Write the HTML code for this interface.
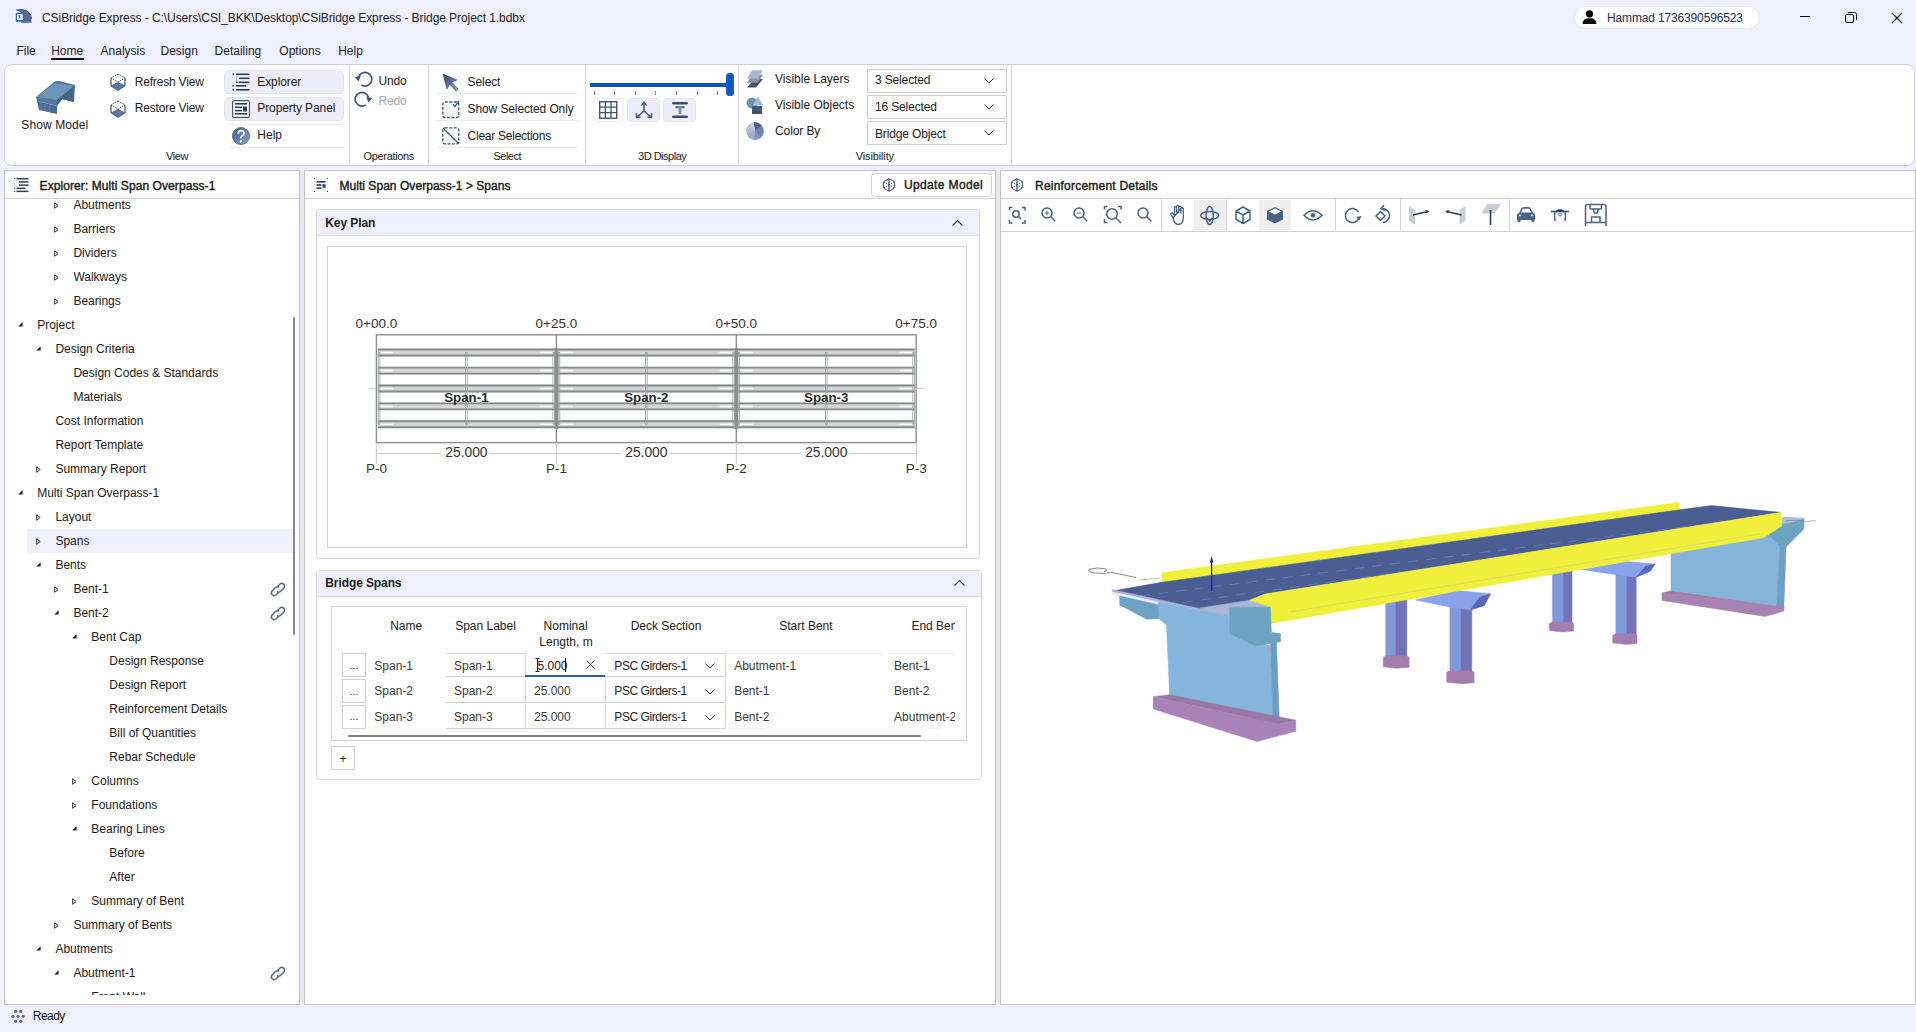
<!DOCTYPE html>
<html><head><meta charset="utf-8"><style>
*{margin:0;padding:0;box-sizing:border-box}
html,body{width:1916px;height:1032px;overflow:hidden}
body{background:#EFEFFD;position:relative;font-family:"Liberation Sans",sans-serif;color:#1b1b1b}
.a{position:absolute}
.t{position:absolute;line-height:12px;height:12px;white-space:pre;font-size:12px}
.sb{-webkit-text-stroke:0.4px currentColor}
svg{position:absolute;overflow:visible}
</style></head><body>
<svg style="left:15px;top:9px;" width="17" height="14" viewBox="0 0 17 14"><path d="M1.2 1 Q9 -0.5 13.5 3 Q16.5 6 16.6 13.8 L6 13.8 L6 3.5 Z" fill="#5E6696"/><path d="M1.2 1 Q9 -0.5 13.5 3 Q16.5 6 16.6 10" fill="none" stroke="#3C4570" stroke-width="0.9"/><rect x="0.8" y="3.8" width="8.4" height="9" rx="0.8" fill="#1C6ED6"/><rect x="2" y="5.2" width="5.8" height="5.8" fill="#F4F8FF"/><rect x="3.8" y="6" width="1.6" height="3.4" fill="#666"/></svg>
<div class="t" style="left:42.00px;top:11.64px;letter-spacing:-0.07px">CSiBridge Express - C:\Users\CSI_BKK\Desktop\CSiBridge Express - Bridge Project 1.bdbx</div>
<div class="a" style="left:1575px;top:6.5px;width:184px;height:21px;background:#fff;border-radius:11px;box-shadow:0 0 0 0.5px #e4e4ee"></div>
<svg style="left:1582px;top:10px;" width="15" height="14" viewBox="0 0 15 14"><circle cx="7.5" cy="3.8" r="3.6" fill="#000"/><path d="M0.5 14 Q0.5 8.2 7.5 8.2 Q14.5 8.2 14.5 14Z" fill="#000"/></svg>
<div class="t" style="left:1607.00px;top:11.74px;color:#1E2B4E;letter-spacing:-0.15px">Hammad 1736390596523</div>
<div class="a" style="left:1800px;top:16px;width:10px;height:1px;background:#111"></div>
<svg style="left:1845px;top:12px;" width="12" height="11" viewBox="0 0 12 11"><rect x="0.5" y="2.5" width="8" height="8" rx="1.5" fill="none" stroke="#111" stroke-width="1"/><path d="M3 0.5 H9.5 Q11.5 0.5 11.5 2.5 V8" fill="none" stroke="#111" stroke-width="1"/></svg>
<svg style="left:1891px;top:11.5px;" width="12" height="12" viewBox="0 0 12 12"><path d="M1 1 L11 11 M11 1 L1 11" stroke="#111" stroke-width="1.1"/></svg>
<div class="t" style="left:16.40px;top:44.94px">File</div>
<div class="t" style="left:51.20px;top:44.94px">Home</div>
<div class="t" style="left:100.60px;top:44.94px">Analysis</div>
<div class="t" style="left:160.50px;top:44.94px">Design</div>
<div class="t" style="left:214.60px;top:44.94px">Detailing</div>
<div class="t" style="left:279.30px;top:44.94px">Options</div>
<div class="t" style="left:338.20px;top:44.94px">Help</div>
<div class="a" style="left:51px;top:58px;width:33px;height:2px;background:#111"></div>
<div class="a" style="left:4px;top:64px;width:1911px;height:102px;background:#fff;border:1px solid #D0D0D2;border-radius:8px"></div>
<svg style="left:0px;top:0px;" width="30" height="1032" viewBox="0 0 30 1032"><circle cx="15.6" cy="1011.4" r="1.6" fill="#5A6A8A"/><circle cx="20.7" cy="1011.4" r="1.6" fill="#5A6A8A"/><circle cx="13" cy="1016.3" r="1.6" fill="#5A6A8A"/><circle cx="18" cy="1016.3" r="1.6" fill="#5A6A8A"/><circle cx="23.1" cy="1016.3" r="1.6" fill="#5A6A8A"/><circle cx="15.6" cy="1021.3" r="1.6" fill="#5A6A8A"/><circle cx="20.7" cy="1021.3" r="1.6" fill="#5A6A8A"/></svg>
<div class="t" style="left:32.80px;top:1009.74px;letter-spacing:-0.537px">Ready</div>
<div class="a" style="left:349px;top:65px;width:1px;height:100px;background:#DCDCE0"></div>
<div class="a" style="left:428px;top:65px;width:1px;height:100px;background:#DCDCE0"></div>
<div class="a" style="left:585px;top:65px;width:1px;height:100px;background:#DCDCE0"></div>
<div class="a" style="left:738px;top:65px;width:1px;height:100px;background:#DCDCE0"></div>
<div class="a" style="left:1011px;top:65px;width:1px;height:100px;background:#DCDCE0"></div>
<div class="t" style="left:166.00px;top:150.69px;font-size:11px;line-height:11px;height:11px;color:#222;letter-spacing:-0.411px">View</div>
<div class="t" style="left:363.50px;top:150.69px;font-size:11px;line-height:11px;height:11px;color:#222;letter-spacing:-0.33px">Operations</div>
<div class="t" style="left:493.50px;top:150.69px;font-size:11px;line-height:11px;height:11px;color:#222;letter-spacing:-0.512px">Select</div>
<div class="t" style="left:638.00px;top:150.69px;font-size:11px;line-height:11px;height:11px;color:#222;letter-spacing:-0.488px">3D Display</div>
<div class="t" style="left:855.70px;top:150.69px;font-size:11px;line-height:11px;height:11px;color:#222;letter-spacing:-0.123px">Visibility</div>
<svg style="left:35px;top:80px;" width="41" height="35" viewBox="0 0 41 35">
<path d="M1 17 L19 2 Q21 0.5 24 1 L40 5 L39 22 L27 19 L22 26 L2 21 Z" fill="#5578A0"/>
<path d="M2 17 L20 3 L39 6 L22 20 Z" fill="#6A96B8"/>
<path d="M2 21 L22 26 L22 34 L4 30 Z" fill="#4A6890"/>
<path d="M22 20 L39 6 L39 22 L27 19 L22 26 Z" fill="#486488"/>
<path d="M6 22 V30 M10 23 V31 M15 24 V32" stroke="#7090B8" stroke-width="0.8"/>
</svg>
<div class="t" style="left:21.30px;top:118.84px;letter-spacing:0.097px">Show Model</div>
<svg style="left:110px;top:73px;" width="16" height="18" viewBox="0 0 16 18">
<path d="M8 1 L15 5 M8 1 L1 5 M1 5 L8 9 L15 5" fill="none" stroke="#3E5576" stroke-width="1" stroke-dasharray="1.5 1"/>
<path d="M1 5 V13 M15 5 V13" stroke="#3E5576" stroke-width="1.2"/>
<path d="M1 13 L8 9.5 L15 13 L8 17.5 Z" fill="#5A7AA8" stroke="#3E5576" stroke-width="0.8"/>
</svg>
<div class="t" style="left:134.70px;top:75.54px;letter-spacing:-0.18px">Refresh View</div>
<svg style="left:110px;top:100px;" width="16" height="18" viewBox="0 0 16 18">
<path d="M8 1 L15 5 M8 1 L1 5 M1 5 L8 9 L15 5" fill="none" stroke="#3E5576" stroke-width="1" stroke-dasharray="1.5 1"/>
<path d="M1 5 V13 M15 5 V13" stroke="#3E5576" stroke-width="1.2"/>
<path d="M1 13 L8 9.5 L15 13 L8 17.5 Z" fill="#5A7AA8" stroke="#3E5576" stroke-width="0.8"/>
</svg>
<div class="t" style="left:134.70px;top:102.44px;letter-spacing:-0.18px">Restore View</div>
<div class="a" style="left:224px;top:70px;width:120px;height:24px;background:#EEEEFA;border:1px solid #E4E4EA;border-radius:5px"></div>
<div class="a" style="left:224px;top:97px;width:120px;height:24px;background:#EEEEFA;border:1px solid #E4E4EA;border-radius:5px"></div>
<div class="a" style="left:230px;top:124px;width:113px;height:1px;background:#EDEDF2"></div>
<div class="a" style="left:230px;top:147px;width:113px;height:1px;background:#E8E8EC"></div>
<svg style="left:232px;top:73px;" width="18" height="18" viewBox="0 0 18 18">
<rect x="0.5" y="0.5" width="1.6" height="1.6" fill="#2C3E5A"/><rect x="4" y="0.5" width="13.5" height="1.6" fill="#2C3E5A"/>
<rect x="7" y="4.5" width="10.5" height="1.6" fill="#2C3E5A"/><rect x="7" y="8.5" width="10.5" height="1.6" fill="#2C3E5A"/>
<rect x="4.2" y="3" width="0.6" height="6" fill="#7F90A8"/><rect x="4" y="8.5" width="1.6" height="1.6" fill="#2C3E5A"/>
<rect x="0.5" y="12" width="1.6" height="1.6" fill="#2C3E5A"/><rect x="4" y="12" width="10" height="1.6" fill="#2C3E5A"/>
<rect x="0.5" y="16" width="1.6" height="1.6" fill="#2C3E5A"/><rect x="4" y="16" width="13.5" height="1.6" fill="#2C3E5A"/>
</svg>
<div class="t" style="left:257.30px;top:76.04px;letter-spacing:-0.1px">Explorer</div>
<svg style="left:232px;top:100px;" width="18" height="18" viewBox="0 0 18 18">
<rect x="0.6" y="0.6" width="16.8" height="16.8" rx="1.5" fill="#fff" stroke="#3E5576" stroke-width="1.1"/>
<rect x="3" y="3" width="12" height="1.6" fill="#2C3E5A"/><rect x="3" y="6.5" width="7" height="1.6" fill="#2C3E5A"/>
<rect x="3" y="9.8" width="7" height="1.6" fill="#2C3E5A"/><rect x="11" y="6.5" width="4" height="5" fill="#2C3E5A"/>
<rect x="3" y="13" width="12" height="1.6" fill="#2C3E5A"/>
</svg>
<div class="t" style="left:257.30px;top:102.04px;letter-spacing:-0.098px">Property Panel</div>
<svg style="left:232px;top:127px;" width="18" height="18" viewBox="0 0 18 18">
<defs><linearGradient id="hg" x1="0" y1="0" x2="1" y2="1"><stop offset="0" stop-color="#3C5A88"/><stop offset="1" stop-color="#8FA3C8"/></linearGradient></defs>
<circle cx="9" cy="9" r="8.6" fill="url(#hg)" stroke="#3A4F70" stroke-width="0.6"/>
<path d="M6.2 6.6 Q6.3 3.6 9.2 3.6 Q12.1 3.7 12 6.3 Q11.9 8 10 9 Q9 9.6 9 11.2" fill="none" stroke="#fff" stroke-width="1.9"/>
<circle cx="9" cy="14.2" r="1.2" fill="#fff"/>
</svg>
<div class="t" style="left:257.30px;top:129.04px">Help</div>
<svg style="left:354px;top:71px;" width="19" height="17" viewBox="0 0 19 17">
<path d="M4.6 6 A6.8 6.8 0 1 1 7.3 13.9" fill="none" stroke="#3E5576" stroke-width="1.7"/>
<path d="M0.6 6.2 L6.8 4.6 L4.6 10.6 Z" fill="#3E5576"/>
</svg>
<div class="t" style="left:378.40px;top:74.54px;letter-spacing:-0.1px">Undo</div>
<svg style="left:354px;top:91px;" width="19" height="17" viewBox="0 0 19 17">
<path d="M14.4 6 A6.8 6.8 0 1 0 11.7 13.9" fill="none" stroke="#3E5576" stroke-width="1.7"/>
<path d="M18.4 6.2 L12.2 4.6 L14.4 10.6 Z" fill="#3E5576" transform="translate(0,1)"/>
</svg>
<div class="t" style="left:378.40px;top:94.64px;color:#ABABAB;letter-spacing:-0.1px">Redo</div>
<svg style="left:442px;top:73px;" width="18" height="19" viewBox="0 0 18 19">
<defs><linearGradient id="sg" x1="0" y1="0" x2="1" y2="1"><stop offset="0" stop-color="#2E4468"/><stop offset="1" stop-color="#8FA0C0"/></linearGradient></defs>
<path d="M1 1 L15 7 L9.5 9 L16 16 L14 18 L7.5 11 L5 16 Z" fill="url(#sg)" stroke="#3A4E6E" stroke-width="0.6"/>
</svg>
<div class="t" style="left:467.60px;top:75.74px;letter-spacing:-0.1px">Select</div>
<svg style="left:442px;top:100px;" width="18" height="18" viewBox="0 0 18 18">
<rect x="0.8" y="2" width="16" height="15.5" rx="2" fill="none" stroke="#3E5576" stroke-width="1.3" stroke-dasharray="3 1.5"/>
<path d="M11 4.5 L13 6.5 L17 1" fill="none" stroke="#3E5576" stroke-width="1.3"/>
</svg>
<div class="t" style="left:467.60px;top:102.84px;letter-spacing:-0.114px">Show Selected Only</div>
<svg style="left:442px;top:127px;" width="18" height="18" viewBox="0 0 18 18">
<rect x="0.8" y="0.8" width="16" height="16" rx="2" fill="none" stroke="#3E5576" stroke-width="1.3" stroke-dasharray="3 1.5"/>
<path d="M1 1 L17 17" stroke="#3E5576" stroke-width="1.2"/>
</svg>
<div class="t" style="left:467.60px;top:129.84px;letter-spacing:-0.25px">Clear Selections</div>
<div class="a" style="left:437px;top:93px;width:141px;height:1px;background:#EBEBEF"></div>
<div class="a" style="left:437px;top:120px;width:141px;height:1px;background:#EBEBEF"></div>
<div class="a" style="left:437px;top:147px;width:141px;height:1px;background:#EBEBEF"></div>
<div class="a" style="left:590px;top:83px;width:140px;height:4px;background:#0D55C2"></div>
<div class="a" style="left:726px;top:73px;width:8px;height:23px;background:#0D55C2;border-radius:4px;box-shadow:inset 0 0 0 1.5px #1A62D0"></div>
<div class="a" style="left:594px;top:91px;width:1px;height:4px;background:#888"></div>
<div class="a" style="left:614px;top:91px;width:1px;height:4px;background:#888"></div>
<div class="a" style="left:635px;top:91px;width:1px;height:4px;background:#888"></div>
<div class="a" style="left:655px;top:91px;width:1px;height:4px;background:#888"></div>
<div class="a" style="left:676px;top:91px;width:1px;height:4px;background:#888"></div>
<div class="a" style="left:697px;top:91px;width:1px;height:4px;background:#888"></div>
<div class="a" style="left:717px;top:91px;width:1px;height:4px;background:#888"></div>
<div class="a" style="left:593px;top:98px;width:31px;height:24px;background:#fff;border:1px solid #F0F0F3;border-radius:4px"></div>
<div class="a" style="left:627px;top:98px;width:33px;height:24px;background:#EEEEFA;border:1px solid #E6E6EC;border-radius:4px"></div>
<div class="a" style="left:663px;top:98px;width:33px;height:24px;background:#EEEEFA;border:1px solid #E6E6EC;border-radius:4px"></div>
<svg style="left:599px;top:101px;" width="19" height="18" viewBox="0 0 19 18">
<rect x="0.7" y="0.7" width="17" height="16.5" fill="none" stroke="#3E5576" stroke-width="1.4"/>
<path d="M6.4 0.7 V17.2 M12 0.7 V17.2 M0.7 6.2 H17.7 M0.7 11.7 H17.7" stroke="#3E5576" stroke-width="1.3"/>
</svg>
<svg style="left:635px;top:101px;" width="18" height="18" viewBox="0 0 18 18">
<path d="M9 2 V10 L2.5 15.5 M9 10 L15.5 15.5" fill="none" stroke="#3E5576" stroke-width="1.5"/>
<path d="M6.5 4.5 L9 1 L11.5 4.5 M1 12.5 L1.5 16.5 L5.5 16 M17 12.5 L16.5 16.5 L12.5 16" fill="none" stroke="#3E5576" stroke-width="1.3"/>
</svg>
<svg style="left:671px;top:101px;" width="18" height="18" viewBox="0 0 18 18">
<rect x="1" y="1" width="16" height="2.4" rx="1.2" fill="#3A4E6C"/>
<rect x="1" y="14.6" width="16" height="2.4" rx="1.2" fill="#3A4E6C"/>
<rect x="4.5" y="5" width="9" height="2.2" fill="#5A7090"/><rect x="7.5" y="5" width="3" height="8" fill="#7F90A8"/>
</svg>
<svg style="left:746px;top:70px;" width="18" height="18" viewBox="0 0 18 18">
<path d="M8.5 9 L17 9 L10 17.5 L1 17.5 Z" fill="#46566E"/>
<path d="M6.5 4.8 L17 4.8 L11.5 12.8 L1 12.8 Z" fill="#7E98A8"/>
<path d="M6 0.3 L17 0.3 L12 8.6 L1 8.6 Z" fill="#A8B4D2"/>
</svg>
<div class="t" style="left:775.00px;top:72.84px">Visible Layers</div>
<svg style="left:746px;top:96px;" width="18" height="18" viewBox="0 0 18 18">
<circle cx="6" cy="7" r="5.5" fill="#6E96A8"/>
<rect x="6" y="10" width="10" height="8" fill="#3E5576"/>
<path d="M12 0.5 L17.5 9.5 L6.5 9.5 Z" fill="#A8B6D6"/>
</svg>
<div class="t" style="left:775.00px;top:98.54px">Visible Objects</div>
<svg style="left:746px;top:122px;" width="18" height="18" viewBox="0 0 18 18">
<circle cx="9" cy="9" r="8.8" fill="#A8B4D0"/>
<path d="M9 9 L7.5 0.3 A8.8 8.8 0 0 1 16 4 Z" fill="#4E6288"/>
<path d="M9 9 L16 4 A8.8 8.8 0 0 1 15 15.5 Z" fill="#6E84B0"/>
<path d="M9 9 L15 15.5 A8.8 8.8 0 0 1 8 17.8 Z" fill="#8396BA"/>
<path d="M9 9 L8 17.8 A8.8 8.8 0 0 1 1 11 Z" fill="#A0AECC"/>
<path d="M9 9 L1 11 A8.8 8.8 0 0 1 3 3 Z" fill="#B4BED6"/>
<path d="M9 9 L3 3 A8.8 8.8 0 0 1 7.5 0.3 Z" fill="#C8D0E0"/>
</svg>
<div class="t" style="left:775.00px;top:124.84px;letter-spacing:-0.1px">Color By</div>
<div class="a" style="left:867px;top:69px;width:140px;height:24px;background:#fff;border:1px solid #CCCCD2"></div>
<div class="t" style="left:875.00px;top:74.34px;letter-spacing:-0.15px">3 Selected</div>
<svg style="left:984px;top:78px;" width="10" height="6" viewBox="0 0 10 6"><path d="M0.5 0.5 L5 5 L9.5 0.5" fill="none" stroke="#333" stroke-width="1"/></svg>
<div class="a" style="left:867px;top:95px;width:140px;height:24px;background:#fff;border:1px solid #CCCCD2"></div>
<div class="t" style="left:875.00px;top:100.54px;letter-spacing:-0.15px">16 Selected</div>
<svg style="left:984px;top:104px;" width="10" height="6" viewBox="0 0 10 6"><path d="M0.5 0.5 L5 5 L9.5 0.5" fill="none" stroke="#333" stroke-width="1"/></svg>
<div class="a" style="left:867px;top:121px;width:140px;height:24px;background:#fff;border:1px solid #CCCCD2"></div>
<div class="t" style="left:875.00px;top:127.84px;letter-spacing:-0.15px">Bridge Object</div>
<svg style="left:984px;top:130px;" width="10" height="6" viewBox="0 0 10 6"><path d="M0.5 0.5 L5 5 L9.5 0.5" fill="none" stroke="#333" stroke-width="1"/></svg>
<div class="a" style="left:4px;top:170px;width:296px;height:835px;background:#fff;border:1px solid #C6C6C8"></div>
<div class="a" style="left:5px;top:198px;width:294px;height:1px;background:#D2D2D4"></div>
<svg style="left:14px;top:178px;" width="15" height="14" viewBox="0 0 15 14">
<rect x="0" y="0" width="1.2" height="1.2" fill="#2C3E5A"/><rect x="2.5" y="0" width="12" height="1.5" fill="#2C3E5A"/>
<rect x="5" y="3.2" width="9.5" height="1.5" fill="#2C3E5A"/><rect x="5" y="6.4" width="9.5" height="1.5" fill="#2C3E5A"/>
<rect x="0" y="9.6" width="1.2" height="1.2" fill="#2C3E5A"/><rect x="2.5" y="9.6" width="9" height="1.5" fill="#2C3E5A"/>
<rect x="0" y="12.6" width="1.2" height="1.2" fill="#2C3E5A"/><rect x="2.5" y="12.6" width="12" height="1.5" fill="#2C3E5A"/>
</svg>
<div class="t sb" style="left:39.60px;top:179.64px;letter-spacing:0.077px">Explorer: Multi Span Overpass-1</div>
<div class="a" style="left:6px;top:199px;width:293px;height:796px;overflow:hidden">
<div class="a" style="left:21px;top:330px;width:267px;height:24px;background:#EFEFFE"></div>
<div class="t" style="left:67.40px;top:-0.36px;color:#1b1b1b">Abutments</div>
<svg style="left:48px;top:3px;" width="5" height="7" viewBox="0 0 5 7"><path d="M0.7 0.7 L4.2 3.5 L0.7 6.3 Z" fill="none" stroke="#333" stroke-width="1"/></svg>
<div class="t" style="left:67.40px;top:23.64px;color:#1b1b1b">Barriers</div>
<svg style="left:48px;top:27px;" width="5" height="7" viewBox="0 0 5 7"><path d="M0.7 0.7 L4.2 3.5 L0.7 6.3 Z" fill="none" stroke="#333" stroke-width="1"/></svg>
<div class="t" style="left:67.40px;top:47.64px;color:#1b1b1b">Dividers</div>
<svg style="left:48px;top:51px;" width="5" height="7" viewBox="0 0 5 7"><path d="M0.7 0.7 L4.2 3.5 L0.7 6.3 Z" fill="none" stroke="#333" stroke-width="1"/></svg>
<div class="t" style="left:67.40px;top:71.64px;color:#1b1b1b">Walkways</div>
<svg style="left:48px;top:75px;" width="5" height="7" viewBox="0 0 5 7"><path d="M0.7 0.7 L4.2 3.5 L0.7 6.3 Z" fill="none" stroke="#333" stroke-width="1"/></svg>
<div class="t" style="left:67.40px;top:95.64px;color:#1b1b1b">Bearings</div>
<svg style="left:48px;top:99px;" width="5" height="7" viewBox="0 0 5 7"><path d="M0.7 0.7 L4.2 3.5 L0.7 6.3 Z" fill="none" stroke="#333" stroke-width="1"/></svg>
<div class="t" style="left:31.20px;top:119.64px;color:#1b1b1b">Project</div>
<svg style="left:12px;top:123px;" width="5" height="5" viewBox="0 0 5 5"><path d="M4.6 0.2 L4.6 4.6 L0.2 4.6 Z" fill="#222"/></svg>
<div class="t" style="left:49.40px;top:143.64px;color:#1b1b1b">Design Criteria</div>
<svg style="left:30px;top:147px;" width="5" height="5" viewBox="0 0 5 5"><path d="M4.6 0.2 L4.6 4.6 L0.2 4.6 Z" fill="#222"/></svg>
<div class="t" style="left:67.40px;top:167.64px;color:#1b1b1b">Design Codes &amp; Standards</div>
<div class="t" style="left:67.40px;top:191.64px;color:#1b1b1b">Materials</div>
<div class="t" style="left:49.40px;top:215.64px;color:#1b1b1b">Cost Information</div>
<div class="t" style="left:49.40px;top:239.64px;color:#1b1b1b">Report Template</div>
<div class="t" style="left:49.40px;top:263.64px;color:#1b1b1b">Summary Report</div>
<svg style="left:30px;top:267px;" width="5" height="7" viewBox="0 0 5 7"><path d="M0.7 0.7 L4.2 3.5 L0.7 6.3 Z" fill="none" stroke="#333" stroke-width="1"/></svg>
<div class="t" style="left:31.20px;top:287.64px;color:#1b1b1b">Multi Span Overpass-1</div>
<svg style="left:12px;top:291px;" width="5" height="5" viewBox="0 0 5 5"><path d="M4.6 0.2 L4.6 4.6 L0.2 4.6 Z" fill="#222"/></svg>
<div class="t" style="left:49.40px;top:311.64px;color:#1b1b1b">Layout</div>
<svg style="left:30px;top:315px;" width="5" height="7" viewBox="0 0 5 7"><path d="M0.7 0.7 L4.2 3.5 L0.7 6.3 Z" fill="none" stroke="#333" stroke-width="1"/></svg>
<div class="t" style="left:49.40px;top:335.64px;color:#1b1b1b">Spans</div>
<svg style="left:30px;top:339px;" width="5" height="7" viewBox="0 0 5 7"><path d="M0.7 0.7 L4.2 3.5 L0.7 6.3 Z" fill="none" stroke="#333" stroke-width="1"/></svg>
<div class="t" style="left:49.40px;top:359.64px;color:#1b1b1b">Bents</div>
<svg style="left:30px;top:363px;" width="5" height="5" viewBox="0 0 5 5"><path d="M4.6 0.2 L4.6 4.6 L0.2 4.6 Z" fill="#222"/></svg>
<div class="t" style="left:67.40px;top:383.64px;color:#1b1b1b">Bent-1</div>
<svg style="left:48px;top:387px;" width="5" height="7" viewBox="0 0 5 7"><path d="M0.7 0.7 L4.2 3.5 L0.7 6.3 Z" fill="none" stroke="#333" stroke-width="1"/></svg>
<svg style="left:264px;top:383px;" width="16" height="15" viewBox="0 0 16 15"><g fill="none" stroke="#56698A" stroke-width="1.5">
<path d="M7.5 4.5 L10 2 Q12 0.5 14 2.5 Q15.5 4.5 13.5 6.5 L10.5 9.5 Q8.5 11 7 9.5"/>
<path d="M8.5 10.5 L6 13 Q4 14.5 2 12.5 Q0.5 10.5 2.5 8.5 L5.5 5.5 Q7.5 4 9 5.5"/></g></svg>
<div class="t" style="left:67.40px;top:407.64px;color:#1b1b1b">Bent-2</div>
<svg style="left:48px;top:411px;" width="5" height="5" viewBox="0 0 5 5"><path d="M4.6 0.2 L4.6 4.6 L0.2 4.6 Z" fill="#222"/></svg>
<svg style="left:264px;top:407px;" width="16" height="15" viewBox="0 0 16 15"><g fill="none" stroke="#56698A" stroke-width="1.5">
<path d="M7.5 4.5 L10 2 Q12 0.5 14 2.5 Q15.5 4.5 13.5 6.5 L10.5 9.5 Q8.5 11 7 9.5"/>
<path d="M8.5 10.5 L6 13 Q4 14.5 2 12.5 Q0.5 10.5 2.5 8.5 L5.5 5.5 Q7.5 4 9 5.5"/></g></svg>
<div class="t" style="left:85.30px;top:431.64px;color:#1b1b1b">Bent Cap</div>
<svg style="left:66px;top:435px;" width="5" height="5" viewBox="0 0 5 5"><path d="M4.6 0.2 L4.6 4.6 L0.2 4.6 Z" fill="#222"/></svg>
<div class="t" style="left:103.30px;top:455.64px;color:#1b1b1b">Design Response</div>
<div class="t" style="left:103.30px;top:479.64px;color:#1b1b1b">Design Report</div>
<div class="t" style="left:103.30px;top:503.64px;color:#1b1b1b">Reinforcement Details</div>
<div class="t" style="left:103.30px;top:527.64px;color:#1b1b1b">Bill of Quantities</div>
<div class="t" style="left:103.30px;top:551.64px;color:#1b1b1b">Rebar Schedule</div>
<div class="t" style="left:85.30px;top:575.64px;color:#1b1b1b">Columns</div>
<svg style="left:66px;top:579px;" width="5" height="7" viewBox="0 0 5 7"><path d="M0.7 0.7 L4.2 3.5 L0.7 6.3 Z" fill="none" stroke="#333" stroke-width="1"/></svg>
<div class="t" style="left:85.30px;top:599.64px;color:#1b1b1b">Foundations</div>
<svg style="left:66px;top:603px;" width="5" height="7" viewBox="0 0 5 7"><path d="M0.7 0.7 L4.2 3.5 L0.7 6.3 Z" fill="none" stroke="#333" stroke-width="1"/></svg>
<div class="t" style="left:85.30px;top:623.64px;color:#1b1b1b">Bearing Lines</div>
<svg style="left:66px;top:627px;" width="5" height="5" viewBox="0 0 5 5"><path d="M4.6 0.2 L4.6 4.6 L0.2 4.6 Z" fill="#222"/></svg>
<div class="t" style="left:103.30px;top:647.64px;color:#1b1b1b">Before</div>
<div class="t" style="left:103.30px;top:671.64px;color:#1b1b1b">After</div>
<div class="t" style="left:85.30px;top:695.64px;color:#1b1b1b">Summary of Bent</div>
<svg style="left:66px;top:699px;" width="5" height="7" viewBox="0 0 5 7"><path d="M0.7 0.7 L4.2 3.5 L0.7 6.3 Z" fill="none" stroke="#333" stroke-width="1"/></svg>
<div class="t" style="left:67.40px;top:719.64px;color:#1b1b1b">Summary of Bents</div>
<svg style="left:48px;top:723px;" width="5" height="7" viewBox="0 0 5 7"><path d="M0.7 0.7 L4.2 3.5 L0.7 6.3 Z" fill="none" stroke="#333" stroke-width="1"/></svg>
<div class="t" style="left:49.40px;top:743.64px;color:#1b1b1b">Abutments</div>
<svg style="left:30px;top:747px;" width="5" height="5" viewBox="0 0 5 5"><path d="M4.6 0.2 L4.6 4.6 L0.2 4.6 Z" fill="#222"/></svg>
<div class="t" style="left:67.40px;top:767.64px;color:#1b1b1b">Abutment-1</div>
<svg style="left:48px;top:771px;" width="5" height="5" viewBox="0 0 5 5"><path d="M4.6 0.2 L4.6 4.6 L0.2 4.6 Z" fill="#222"/></svg>
<svg style="left:264px;top:767px;" width="16" height="15" viewBox="0 0 16 15"><g fill="none" stroke="#56698A" stroke-width="1.5">
<path d="M7.5 4.5 L10 2 Q12 0.5 14 2.5 Q15.5 4.5 13.5 6.5 L10.5 9.5 Q8.5 11 7 9.5"/>
<path d="M8.5 10.5 L6 13 Q4 14.5 2 12.5 Q0.5 10.5 2.5 8.5 L5.5 5.5 Q7.5 4 9 5.5"/></g></svg>
<div class="t" style="left:85.30px;top:791.64px;color:#1b1b1b">Front Wall</div>
</div>
<div class="a" style="left:293px;top:317px;width:2px;height:318px;background:#8A8A8E;border-radius:1px"></div>
<div class="a" style="left:300px;top:170px;width:4px;height:835px;background:#EAEAEE"></div>
<div class="a" style="left:996px;top:170px;width:4px;height:835px;background:#EAEAEE"></div>
<div class="a" style="left:304px;top:170px;width:692px;height:835px;background:#fff;border:1px solid #C6C6C8"></div>
<div class="a" style="left:305px;top:198px;width:690px;height:1px;background:#D2D2D4"></div>
<svg style="left:314px;top:178px;" width="14" height="14" viewBox="0 0 14 14">
<g fill="#2C3E5A"><rect x="0" y="0" width="1" height="1"/><rect x="13" y="0" width="1" height="1"/><rect x="0" y="13" width="1" height="1"/><rect x="13" y="13" width="1" height="1"/></g>
<rect x="2.5" y="3" width="9" height="1.6" fill="#2C3E5A"/><rect x="2.5" y="6.2" width="5" height="1.6" fill="#2C3E5A"/>
<rect x="8.5" y="6.2" width="3" height="3.5" fill="#2C3E5A"/><rect x="2.5" y="9.4" width="5" height="1.6" fill="#2C3E5A"/>
</svg>
<div class="t sb" style="left:339.40px;top:180.34px;letter-spacing:0.05px">Multi Span Overpass-1 &gt; Spans</div>
<div class="a" style="left:871px;top:173px;width:121px;height:24px;background:#fff;border:1px solid #CFCFD6;border-radius:4px"></div>
<svg style="left:882px;top:178px;" width="14" height="14" viewBox="0 0 14 14"><g fill="none" stroke="#3E5576" stroke-width="1">
<path d="M7 0.6 L12.6 3.8 V10 L7 13.2 L1.4 10 V3.8 Z"/><path d="M7 0.6 V13.2" stroke-width="1.3"/><path d="M7 7 L1.4 3.8 M7 7 L12.6 3.8 M7 7 L1.4 10 M7 7 L12.6 10" stroke-dasharray="1.2 1"/></g></svg>
<div class="t sb" style="left:903.90px;top:178.54px;letter-spacing:0.374px">Update Model</div>
<div class="a" style="left:316px;top:209px;width:664px;height:350px;background:#fff;border:1px solid #D8D8E0;border-radius:4px"></div>
<div class="a" style="left:317px;top:210px;width:662px;height:25px;background:#EFEFFD;border-radius:3px 3px 0 0"></div>
<div class="a" style="left:317px;top:235px;width:662px;height:1px;background:#DADAE2"></div>
<div class="t" style="left:325.30px;top:216.94px;font-weight:700;letter-spacing:-0.1px">Key Plan</div>
<svg style="left:952px;top:220px;" width="11" height="6" viewBox="0 0 11 6"><path d="M0.5 5.5 L5.5 0.5 L10.5 5.5" fill="none" stroke="#333" stroke-width="1.1"/></svg>
<div class="a" style="left:327px;top:246px;width:640px;height:302px;background:#fff;border:1px solid #D0D0D6"></div>
<svg style="left:0px;top:0px;pointer-events:none" width="1916" height="1032" viewBox="0 0 1916 1032"><text x="376.4" y="327.5" text-anchor="middle" font-size="13.5" fill="#333">0+00.0</text><text x="376.4" y="473.3" text-anchor="middle" font-size="13.5" fill="#333">P-0</text><text x="556.4" y="327.5" text-anchor="middle" font-size="13.5" fill="#333">0+25.0</text><text x="556.4" y="473.3" text-anchor="middle" font-size="13.5" fill="#333">P-1</text><text x="736.3" y="327.5" text-anchor="middle" font-size="13.5" fill="#333">0+50.0</text><text x="736.3" y="473.3" text-anchor="middle" font-size="13.5" fill="#333">P-2</text><text x="916.2" y="327.5" text-anchor="middle" font-size="13.5" fill="#333">0+75.0</text><text x="916.2" y="473.3" text-anchor="middle" font-size="13.5" fill="#333">P-3</text><rect x="376.4" y="334.8" width="539.8" height="107.8" fill="none" stroke="#8C8F8F" stroke-width="1.4"/><rect x="377.9" y="348.7" width="177.0" height="7.6" fill="#D4D6D6"/><path d="M377.9 349.5 H554.9 M377.9 355.5 H554.9" stroke="#868A8A" stroke-width="1.9"/><path d="M380.4 352.5 H392.4 M540.4 352.5 H552.4" stroke="#fff" stroke-width="1.6" stroke-linecap="round"/><rect x="377.9" y="366.8" width="177.0" height="7.6" fill="#D4D6D6"/><path d="M377.9 367.6 H554.9 M377.9 373.6 H554.9" stroke="#868A8A" stroke-width="1.9"/><path d="M380.4 370.6 H392.4 M540.4 370.6 H552.4" stroke="#fff" stroke-width="1.6" stroke-linecap="round"/><rect x="377.9" y="384.7" width="177.0" height="7.6" fill="#D4D6D6"/><path d="M377.9 385.5 H554.9 M377.9 391.5 H554.9" stroke="#868A8A" stroke-width="1.9"/><path d="M380.4 388.5 H392.4 M540.4 388.5 H552.4" stroke="#fff" stroke-width="1.6" stroke-linecap="round"/><rect x="377.9" y="402.59999999999997" width="177.0" height="7.6" fill="#D4D6D6"/><path d="M377.9 403.4 H554.9 M377.9 409.4 H554.9" stroke="#868A8A" stroke-width="1.9"/><path d="M380.4 406.4 H392.4 M540.4 406.4 H552.4" stroke="#fff" stroke-width="1.6" stroke-linecap="round"/><rect x="377.9" y="420.5" width="177.0" height="7.6" fill="#D4D6D6"/><path d="M377.9 421.3 H554.9 M377.9 427.3 H554.9" stroke="#868A8A" stroke-width="1.9"/><path d="M380.4 424.3 H392.4 M540.4 424.3 H552.4" stroke="#fff" stroke-width="1.6" stroke-linecap="round"/><rect x="465.59999999999997" y="352.5" width="1.6" height="71.8" fill="none" stroke="#9A9E9E" stroke-width="0.8"/><rect x="378.2" y="352.5" width="1.6" height="71.8" fill="none" stroke="#9A9E9E" stroke-width="0.8"/><rect x="553.0" y="352.5" width="1.6" height="71.8" fill="none" stroke="#9A9E9E" stroke-width="0.8"/><text x="466.4" y="401.5" text-anchor="middle" font-size="13.3" font-weight="bold" fill="#2a2a2a">Span-1</text><text x="466.4" y="457" text-anchor="middle" font-size="13.8" fill="#333">25.000</text><path d="M376.4 453.6 H441.4 M489.4 453.6 H556.4" stroke="#C8CACA" stroke-width="1"/><rect x="557.9" y="348.7" width="176.89999999999998" height="7.6" fill="#D4D6D6"/><path d="M557.9 349.5 H734.8 M557.9 355.5 H734.8" stroke="#868A8A" stroke-width="1.9"/><path d="M560.4 352.5 H572.4 M720.3 352.5 H732.3" stroke="#fff" stroke-width="1.6" stroke-linecap="round"/><rect x="557.9" y="366.8" width="176.89999999999998" height="7.6" fill="#D4D6D6"/><path d="M557.9 367.6 H734.8 M557.9 373.6 H734.8" stroke="#868A8A" stroke-width="1.9"/><path d="M560.4 370.6 H572.4 M720.3 370.6 H732.3" stroke="#fff" stroke-width="1.6" stroke-linecap="round"/><rect x="557.9" y="384.7" width="176.89999999999998" height="7.6" fill="#D4D6D6"/><path d="M557.9 385.5 H734.8 M557.9 391.5 H734.8" stroke="#868A8A" stroke-width="1.9"/><path d="M560.4 388.5 H572.4 M720.3 388.5 H732.3" stroke="#fff" stroke-width="1.6" stroke-linecap="round"/><rect x="557.9" y="402.59999999999997" width="176.89999999999998" height="7.6" fill="#D4D6D6"/><path d="M557.9 403.4 H734.8 M557.9 409.4 H734.8" stroke="#868A8A" stroke-width="1.9"/><path d="M560.4 406.4 H572.4 M720.3 406.4 H732.3" stroke="#fff" stroke-width="1.6" stroke-linecap="round"/><rect x="557.9" y="420.5" width="176.89999999999998" height="7.6" fill="#D4D6D6"/><path d="M557.9 421.3 H734.8 M557.9 427.3 H734.8" stroke="#868A8A" stroke-width="1.9"/><path d="M560.4 424.3 H572.4 M720.3 424.3 H732.3" stroke="#fff" stroke-width="1.6" stroke-linecap="round"/><rect x="645.55" y="352.5" width="1.6" height="71.8" fill="none" stroke="#9A9E9E" stroke-width="0.8"/><rect x="558.1999999999999" y="352.5" width="1.6" height="71.8" fill="none" stroke="#9A9E9E" stroke-width="0.8"/><rect x="732.9" y="352.5" width="1.6" height="71.8" fill="none" stroke="#9A9E9E" stroke-width="0.8"/><text x="646.3499999999999" y="401.5" text-anchor="middle" font-size="13.3" font-weight="bold" fill="#2a2a2a">Span-2</text><text x="646.3499999999999" y="457" text-anchor="middle" font-size="13.8" fill="#333">25.000</text><path d="M556.4 453.6 H621.3499999999999 M669.3499999999999 453.6 H736.3" stroke="#C8CACA" stroke-width="1"/><rect x="737.8" y="348.7" width="176.9000000000001" height="7.6" fill="#D4D6D6"/><path d="M737.8 349.5 H914.7 M737.8 355.5 H914.7" stroke="#868A8A" stroke-width="1.9"/><path d="M740.3 352.5 H752.3 M900.2 352.5 H912.2" stroke="#fff" stroke-width="1.6" stroke-linecap="round"/><rect x="737.8" y="366.8" width="176.9000000000001" height="7.6" fill="#D4D6D6"/><path d="M737.8 367.6 H914.7 M737.8 373.6 H914.7" stroke="#868A8A" stroke-width="1.9"/><path d="M740.3 370.6 H752.3 M900.2 370.6 H912.2" stroke="#fff" stroke-width="1.6" stroke-linecap="round"/><rect x="737.8" y="384.7" width="176.9000000000001" height="7.6" fill="#D4D6D6"/><path d="M737.8 385.5 H914.7 M737.8 391.5 H914.7" stroke="#868A8A" stroke-width="1.9"/><path d="M740.3 388.5 H752.3 M900.2 388.5 H912.2" stroke="#fff" stroke-width="1.6" stroke-linecap="round"/><rect x="737.8" y="402.59999999999997" width="176.9000000000001" height="7.6" fill="#D4D6D6"/><path d="M737.8 403.4 H914.7 M737.8 409.4 H914.7" stroke="#868A8A" stroke-width="1.9"/><path d="M740.3 406.4 H752.3 M900.2 406.4 H912.2" stroke="#fff" stroke-width="1.6" stroke-linecap="round"/><rect x="737.8" y="420.5" width="176.9000000000001" height="7.6" fill="#D4D6D6"/><path d="M737.8 421.3 H914.7 M737.8 427.3 H914.7" stroke="#868A8A" stroke-width="1.9"/><path d="M740.3 424.3 H752.3 M900.2 424.3 H912.2" stroke="#fff" stroke-width="1.6" stroke-linecap="round"/><rect x="825.45" y="352.5" width="1.6" height="71.8" fill="none" stroke="#9A9E9E" stroke-width="0.8"/><rect x="738.0999999999999" y="352.5" width="1.6" height="71.8" fill="none" stroke="#9A9E9E" stroke-width="0.8"/><rect x="912.8000000000001" y="352.5" width="1.6" height="71.8" fill="none" stroke="#9A9E9E" stroke-width="0.8"/><text x="826.25" y="401.5" text-anchor="middle" font-size="13.3" font-weight="bold" fill="#2a2a2a">Span-3</text><text x="826.25" y="457" text-anchor="middle" font-size="13.8" fill="#333">25.000</text><path d="M736.3 453.6 H801.25 M849.25 453.6 H916.2" stroke="#C8CACA" stroke-width="1"/><path d="M556.4 335 V442.6" stroke="#8C8F8F" stroke-width="1.4"/><path d="M556.4 348 V429" stroke="#8C8F8F" stroke-width="3.5"/><path d="M736.3 335 V442.6" stroke="#8C8F8F" stroke-width="1.4"/><path d="M736.3 348 V429" stroke="#8C8F8F" stroke-width="3.5"/><path d="M376.4 442.6 V464" stroke="#C8CACA" stroke-width="1"/><path d="M556.4 442.6 V464" stroke="#C8CACA" stroke-width="1"/><path d="M736.3 442.6 V464" stroke="#C8CACA" stroke-width="1"/><path d="M916.2 442.6 V464" stroke="#C8CACA" stroke-width="1"/><path d="M369 388.6 H376" stroke="#C8C0A8" stroke-width="0.8"/><path d="M916 388.6 H923" stroke="#C8C0A8" stroke-width="0.8"/></svg>
<div class="a" style="left:316px;top:570px;width:666px;height:210px;background:#fff;border:1px solid #D8D8E0;border-radius:4px"></div>
<div class="a" style="left:317px;top:571px;width:664px;height:25px;background:#EFEFFD;border-radius:3px 3px 0 0"></div>
<div class="a" style="left:317px;top:596px;width:664px;height:1px;background:#DADAE2"></div>
<div class="t" style="left:325.30px;top:576.84px;font-weight:700;letter-spacing:-0.1px">Bridge Spans</div>
<svg style="left:954px;top:580px;" width="11" height="6" viewBox="0 0 11 6"><path d="M0.5 5.5 L5.5 0.5 L10.5 5.5" fill="none" stroke="#333" stroke-width="1.1"/></svg>
<div class="a" style="left:331px;top:606px;width:636px;height:135px;background:#fff;border:1px solid #D2D2D8"></div>
<div class="a" style="left:332px;top:607px;width:623px;height:133px;overflow:hidden">
<div class="t" style="left:-75.80px;width:300px;text-align:center;top:13.04px">Name</div>
<div class="t" style="left:3.50px;width:300px;text-align:center;top:13.04px">Span Label</div>
<div class="t" style="left:83.60px;width:300px;text-align:center;top:13.04px">Nominal</div>
<div class="t" style="left:184.00px;width:300px;text-align:center;top:13.04px">Deck Section</div>
<div class="t" style="left:323.90px;width:300px;text-align:center;top:13.04px">Start Bent</div>
<div class="t" style="left:84.00px;width:300px;text-align:center;top:29.24px">Length, m</div>
<div class="t" style="left:579.40px;top:13.04px">End Bent</div>
<div class="a" style="left:10px;top:46px;width:24px;height:24px;background:#fff;border:1px solid #CFCFD4"></div>
<div class="t" style="left:-128.00px;width:300px;text-align:center;top:53.49px;font-size:11px;line-height:11px;height:11px;color:#333">...</div>
<div class="t" style="left:42.30px;top:52.64px;color:#3a3a3a">Span-1</div>
<div class="a" style="left:114px;top:69px;width:79px;height:1px;background:#CFCFD4"></div>
<div class="a" style="left:193px;top:69px;width:80px;height:1px;background:#CFCFD4"></div>
<div class="a" style="left:273px;top:69px;width:120px;height:1px;background:#CFCFD4"></div>
<div class="a" style="left:114px;top:46px;width:80px;height:1px;background:#DCDCE0"></div>
<div class="a" style="left:273px;top:46px;width:120px;height:1px;background:#DCDCE0"></div>
<div class="a" style="left:393px;top:46px;width:1px;height:24px;background:#D8D8DC"></div>
<div class="a" style="left:193px;top:46px;width:1px;height:24px;background:#D8D8DC"></div>
<div class="a" style="left:396px;top:46px;width:154px;height:1px;background:#EFEFF2"></div>
<div class="a" style="left:556px;top:46px;width:68px;height:1px;background:#EFEFF2"></div>
<div class="t" style="left:122.00px;top:52.64px;color:#3a3a3a">Span-1</div>
<div class="t" style="left:282.30px;top:52.64px;color:#222;letter-spacing:-0.425px">PSC Girders-1</div>
<svg style="left:373px;top:56px;" width="10" height="6" viewBox="0 0 10 6"><path d="M0.5 0.5 L5 5 L9.5 0.5" fill="none" stroke="#444" stroke-width="1"/></svg>
<div class="t" style="left:402.20px;top:52.64px;color:#3a3a3a">Abutment-1</div>
<div class="t" style="left:562.10px;top:52.64px;color:#3a3a3a">Bent-1</div>
<div class="a" style="left:193px;top:68px;width:80px;height:2px;background:#2E5AAE"></div>
<div class="t" style="left:205.50px;top:52.64px;color:#222">5.000</div>
<div class="a" style="left:233px;top:51px;width:1px;height:14px;background:#111"></div>
<svg style="left:203px;top:51px;" width="5" height="14" viewBox="0 0 5 14"><path d="M0.5 0.5 H4.5 M2.5 0.5 V13.5 M0.5 13.5 H4.5" stroke="#222" stroke-width="1" fill="none"/></svg>
<svg style="left:254px;top:53px;" width="9" height="9" viewBox="0 0 9 9"><path d="M0.5 0.5 L8.5 8.5 M8.5 0.5 L0.5 8.5" stroke="#555" stroke-width="1"/></svg>
<div class="a" style="left:10px;top:72px;width:24px;height:24px;background:#fff;border:1px solid #CFCFD4"></div>
<div class="t" style="left:-128.00px;width:300px;text-align:center;top:78.69px;font-size:11px;line-height:11px;height:11px;color:#333">...</div>
<div class="t" style="left:42.30px;top:77.84px;color:#3a3a3a">Span-2</div>
<div class="a" style="left:114px;top:95px;width:79px;height:1px;background:#CFCFD4"></div>
<div class="a" style="left:193px;top:95px;width:80px;height:1px;background:#CFCFD4"></div>
<div class="a" style="left:273px;top:95px;width:120px;height:1px;background:#CFCFD4"></div>
<div class="a" style="left:393px;top:72px;width:1px;height:24px;background:#D8D8DC"></div>
<div class="a" style="left:193px;top:72px;width:1px;height:24px;background:#D8D8DC"></div>
<div class="a" style="left:273px;top:72px;width:1px;height:24px;background:#D8D8DC"></div>
<div class="t" style="left:122.00px;top:77.84px;color:#3a3a3a">Span-2</div>
<div class="t" style="left:282.30px;top:77.84px;color:#222;letter-spacing:-0.425px">PSC Girders-1</div>
<svg style="left:373px;top:82px;" width="10" height="6" viewBox="0 0 10 6"><path d="M0.5 0.5 L5 5 L9.5 0.5" fill="none" stroke="#444" stroke-width="1"/></svg>
<div class="t" style="left:402.20px;top:77.84px;color:#3a3a3a">Bent-1</div>
<div class="t" style="left:562.10px;top:77.84px;color:#3a3a3a">Bent-2</div>
<div class="t" style="left:202.00px;top:77.84px;color:#3a3a3a">25.000</div>
<div class="a" style="left:10px;top:98px;width:24px;height:24px;background:#fff;border:1px solid #CFCFD4"></div>
<div class="t" style="left:-128.00px;width:300px;text-align:center;top:104.49px;font-size:11px;line-height:11px;height:11px;color:#333">...</div>
<div class="t" style="left:42.30px;top:103.64px;color:#3a3a3a">Span-3</div>
<div class="a" style="left:114px;top:121px;width:79px;height:1px;background:#CFCFD4"></div>
<div class="a" style="left:193px;top:121px;width:80px;height:1px;background:#CFCFD4"></div>
<div class="a" style="left:273px;top:121px;width:120px;height:1px;background:#CFCFD4"></div>
<div class="a" style="left:393px;top:98px;width:1px;height:24px;background:#D8D8DC"></div>
<div class="a" style="left:193px;top:98px;width:1px;height:24px;background:#D8D8DC"></div>
<div class="a" style="left:273px;top:98px;width:1px;height:24px;background:#D8D8DC"></div>
<div class="a" style="left:396px;top:121px;width:38px;height:1px;background:#F0F0F3"></div>
<div class="a" style="left:596px;top:121px;width:14px;height:1px;background:#F0F0F3"></div>
<div class="t" style="left:122.00px;top:103.64px;color:#3a3a3a">Span-3</div>
<div class="t" style="left:282.30px;top:103.64px;color:#222;letter-spacing:-0.425px">PSC Girders-1</div>
<svg style="left:373px;top:108px;" width="10" height="6" viewBox="0 0 10 6"><path d="M0.5 0.5 L5 5 L9.5 0.5" fill="none" stroke="#444" stroke-width="1"/></svg>
<div class="t" style="left:402.20px;top:103.64px;color:#3a3a3a">Bent-2</div>
<div class="t" style="left:562.10px;top:103.64px;color:#3a3a3a">Abutment-2</div>
<div class="t" style="left:202.00px;top:103.64px;color:#3a3a3a">25.000</div>
<div class="a" style="left:16px;top:128px;width:573px;height:2px;background:#7E7E84;border-radius:1px"></div>
</div>
<div class="a" style="left:331px;top:746px;width:24px;height:24px;background:#fff;border:1px solid #CFCFD4"></div>
<div class="t" style="left:193.00px;width:300px;text-align:center;top:753.04px;color:#222">+</div>
<div class="a" style="left:1000px;top:170px;width:916px;height:835px;background:#fff;border:1px solid #C6C6C8"></div>
<div class="a" style="left:1001px;top:198px;width:913px;height:1px;background:#D2D2D4"></div>
<div class="a" style="left:1001px;top:231px;width:913px;height:1px;background:#D2D2D4"></div>
<svg style="left:1010px;top:178px;" width="14" height="13" viewBox="0 0 14 13"><g fill="none" stroke="#3E5576" stroke-width="1">
<path d="M7 0.6 L12.6 3.8 V10 L7 13.2 L1.4 10 V3.8 Z"/><path d="M7 0.6 V13.2" stroke-width="1.3"/><path d="M7 7 L1.4 3.8 M7 7 L12.6 3.8 M7 7 L1.4 10 M7 7 L12.6 10" stroke-dasharray="1.2 1"/></g></svg>
<div class="t sb" style="left:1035.00px;top:180.24px;letter-spacing:0.222px">Reinforcement Details</div>
<div class="a" style="left:1161px;top:199px;width:1px;height:32px;background:#D4D4DA"></div>
<div class="a" style="left:1226px;top:199px;width:1px;height:32px;background:#D4D4DA"></div>
<div class="a" style="left:1335px;top:199px;width:1px;height:32px;background:#D4D4DA"></div>
<div class="a" style="left:1400px;top:199px;width:1px;height:32px;background:#D4D4DA"></div>
<div class="a" style="left:1509px;top:199px;width:1px;height:32px;background:#D4D4DA"></div>
<div class="a" style="left:1194px;top:200px;width:32px;height:30px;background:#EFEFF0"></div>
<div class="a" style="left:1259px;top:200px;width:32px;height:30px;background:#EFEFF0"></div>
<svg style="left:0px;top:0px;pointer-events:none" width="1916" height="1032" viewBox="0 0 1916 1032"><path d="M1009.5 210.5 V207.5 H1012.5 M1022 207.5 H1025 V210.5 M1025 220 V223 H1022 M1012.5 223 H1009.5 V220" fill="none" stroke="#4A6288" stroke-width="1.5"/><circle cx="1016" cy="214" r="3.2" fill="none" stroke="#4A6288" stroke-width="1.5"/><path d="M1018.5 216.5 L1021 219" fill="none" stroke="#4A6288" stroke-width="1.5"/><circle cx="1047" cy="213" r="5" fill="none" stroke="#4A6288" stroke-width="1.5"/><path d="M1050.8 216.8 L1055.2 221.2" fill="none" stroke="#4A6288" stroke-width="1.5" stroke-width="1.8"/><path d="M1047 210.8 V215.2 M1044.8 213 H1049.2" stroke="#4A6288" stroke-width="1"/><circle cx="1079" cy="213" r="5" fill="none" stroke="#4A6288" stroke-width="1.5"/><path d="M1082.8 216.8 L1087.2 221.2" fill="none" stroke="#4A6288" stroke-width="1.5" stroke-width="1.8"/><path d="M1076.8 213 H1081.2" stroke="#4A6288" stroke-width="1"/><path d="M1104.5 209.5 V206.5 H1107.5 M1118 206.5 H1121 V209.5 M1104.5 219 V222.5 H1107.5" fill="none" stroke="#4A6288" stroke-width="1.5"/><circle cx="1112" cy="214" r="5.3" fill="none" stroke="#4A6288" stroke-width="1.5"/><path d="M1116 218 L1121 223" fill="none" stroke="#4A6288" stroke-width="1.5" stroke-width="1.9"/><circle cx="1143" cy="213" r="5" fill="none" stroke="#4A6288" stroke-width="1.5"/><path d="M1146.8 216.8 L1151.5 221.5" fill="none" stroke="#4A6288" stroke-width="1.5" stroke-width="1.8"/><path d="M1173 218 L1171 214.5 Q1170.5 212.5 1172.5 213 L1174.5 215.5 V207.5 Q1175.5 206 1176.5 207.5 V213 M1176.5 207.5 V206.5 Q1177.7 205 1178.8 206.5 V213 M1178.8 207 Q1180 205.5 1181 207 V213.5 M1181 208.5 Q1182.2 207 1183.3 208.5 V218 Q1183.3 224 1178.5 224.5 Q1174.5 224.5 1173 218 Z" fill="#fff" stroke="#4A6288" stroke-width="1.3"/><ellipse cx="1209.7" cy="215.5" rx="9" ry="4" fill="none" stroke="#4A6288" stroke-width="1.5"/><ellipse cx="1209.7" cy="215.5" rx="3.6" ry="9" fill="none" stroke="#4A6288" stroke-width="1.5"/><path d="M1207 218 L1209.7 221 L1212 218" fill="none" stroke="#4A6288" stroke-width="1.5"/><path d="M1243 207 L1250 211 V219.5 L1243 223.5 L1236 219.5 V211 Z M1236 211 L1243 215 L1250 211 M1243 215 V223.5" fill="none" stroke="#4A6288" stroke-width="1.5" stroke-linejoin="round"/><path d="M1275 207 L1283 211 V219.5 L1275 223.5 L1267 219.5 V211 Z" fill="#4A6288"/><path d="M1275 208.5 L1281 211.5 L1275 214.5 L1269 211.5 Z" fill="#fff"/><path d="M1304 215.3 Q1313 206 1322 215.3 Q1313 224.6 1304 215.3 Z" fill="none" stroke="#4A6288" stroke-width="1.5"/><circle cx="1313" cy="215.3" r="2.2" fill="#4A6288"/><path d="M1358.5 212 A7 7 0 1 0 1359 218" fill="none" stroke="#4A6288" stroke-width="1.5"/><path d="M1356 217 L1359.5 220.5 L1361.5 216" fill="#4A6288"/><path d="M1382 208.5 A7 7 0 1 1 1383 222.5" fill="none" stroke="#4A6288" stroke-width="1.5"/><path d="M1384 205 L1381 208.5 L1385 210.5" fill="none" stroke="#4A6288" stroke-width="1.5"/><path d="M1376 216 L1380.5 211.5 L1385 216 L1380.5 220.5 Z" fill="none" stroke="#4A6288" stroke-width="1.5"/><path d="M1409 206 L1415 210 V224.5 L1409 220.5 Z" fill="#C8CDD6"/><path d="M1413 215 L1428 211.5" stroke="#2C3E5A" stroke-width="1.5"/><path d="M1425 210 L1429.5 211 L1426.5 213.5Z" fill="#2C3E5A"/><path d="M1465.5 206 L1459.5 210 V224.5 L1465.5 220.5 Z" fill="#C8CDD6"/><path d="M1461.5 215 L1446.5 211.5" stroke="#2C3E5A" stroke-width="1.5"/><path d="M1449.5 210 L1445 211 L1448 213.5Z" fill="#2C3E5A"/><path d="M1487 204 H1501 L1494.5 213.5 H1481.5 Z" fill="#C8CDD6"/><path d="M1490.5 210 V225" stroke="#2C3E5A" stroke-width="1.6"/><path d="M1519 213 L1521.5 208 Q1522 207 1524 207 H1528 Q1530 207 1530.5 208 L1533 213 Q1535 213.5 1535 215 V220 H1517 V215 Q1517 213.5 1519 213 Z" fill="#4A6288"/><path d="M1521 212.5 L1522.8 208.8 H1529.2 L1531 212.5 Z" fill="#fff"/><rect x="1517.5" y="219" width="3" height="3" rx="1" fill="#4A6288"/><rect x="1531.5" y="219" width="3" height="3" rx="1" fill="#4A6288"/><circle cx="1520" cy="215.5" r="1" fill="#fff"/><circle cx="1532" cy="215.5" r="1" fill="#fff"/><path d="M1551 211.5 H1569" stroke="#2C4A78" stroke-width="1.6"/><path d="M1555.5 211 Q1560 207 1564.5 211 Z" fill="#2C4A78"/><path d="M1555 212 Q1554 216 1555 221 M1565 212 Q1566 216 1565 221" fill="none" stroke="#4A6288" stroke-width="1.5" stroke-width="1"/><circle cx="1560" cy="214.5" r="1.6" fill="none" stroke="#4A6288" stroke-width="0.8"/><path d="M1585.5 226 V206.5 Q1585.5 204.5 1587.5 204.5 H1604 Q1606 204.5 1606 206.5 V226 M1585.5 222.5 H1606" fill="none" stroke="#4A6288" stroke-width="1.5" stroke-width="1.3"/><path d="M1590 205 V208 Q1590 209 1591 209 H1600.5 Q1601.5 209 1601.5 208 V205 M1593 209 L1594.5 213 H1597 L1598.5 209 M1591.5 222 V217 H1600 V222" fill="none" stroke="#4A6288" stroke-width="1.5" stroke-width="1.2"/></svg>
<svg style="left:0px;top:0px;pointer-events:none" width="1916" height="1032" viewBox="0 0 1916 1032"><polygon points="1662.0,593.0 1784.0,604.7 1784.0,611.0 1765.0,616.4 1662.0,600.4" fill="#A882B0" stroke="#A882B0" stroke-width="0.5" stroke-linejoin="round" /><polygon points="1662.0,593.0 1671.0,590.8 1776.5,603.0 1784.0,604.7" fill="#9A7AA6" stroke="#9A7AA6" stroke-width="0.5" stroke-linejoin="round" /><polygon points="1671.0,549.0 1765.0,530.0 1780.0,546.0 1776.5,605.7 1671.0,590.8" fill="#85B4DA" stroke="#85B4DA" stroke-width="0.5" stroke-linejoin="round" /><polygon points="1780.0,546.0 1786.0,547.0 1784.0,604.0 1776.5,605.7" fill="#6FA0C0" stroke="#6FA0C0" stroke-width="0.5" stroke-linejoin="round" /><polygon points="1763.7,529.0 1784.0,517.3 1804.0,518.4 1804.0,529.0 1786.0,547.0 1779.7,546.0" fill="#6CA2C2" stroke="#6CA2C2" stroke-width="0.5" stroke-linejoin="round" /><polygon points="1768.0,526.0 1784.0,517.3 1804.0,518.4 1790.0,522.5" fill="#A9C2DC" stroke="#A9C2DC" stroke-width="0.5" stroke-linejoin="round" /><polygon points="1552.4,570.0 1563.4,570.0 1563.4,622.6 1552.4,622.6" fill="#7F9ADC" stroke="#7F9ADC" stroke-width="0.5" stroke-linejoin="round" /><polygon points="1563.4,570.0 1572.0,570.0 1572.0,622.6 1563.4,622.6" fill="#7373B8" stroke="#7373B8" stroke-width="0.5" stroke-linejoin="round" /><polygon points="1549.3,623.6 1552.4,622.1 1572.0,622.1 1573.5,623.6 1573.5,631.1 1563.4,632.1 1549.3,630.6" fill="#A37DAE" stroke="#A37DAE" stroke-width="0.5" stroke-linejoin="round" /><polygon points="1615.8,574.0 1626.8,574.0 1626.8,634.4 1615.8,634.4" fill="#7F9ADC" stroke="#7F9ADC" stroke-width="0.5" stroke-linejoin="round" /><polygon points="1626.8,574.0 1636.2,574.0 1636.2,634.4 1626.8,634.4" fill="#7373B8" stroke="#7373B8" stroke-width="0.5" stroke-linejoin="round" /><polygon points="1612.7,635.4 1615.8,633.9 1636.2,633.9 1637.0,635.4 1637.0,643.4 1626.8,644.4 1612.7,642.9" fill="#A37DAE" stroke="#A37DAE" stroke-width="0.5" stroke-linejoin="round" /><polygon points="1581.4,569.4 1626.8,561.6 1655.0,563.9 1650.3,571.0 1636.2,577.2 1617.4,574.9" fill="#8AA2EA" stroke="#8AA2EA" stroke-width="0.5" stroke-linejoin="round" /><polygon points="1636.2,577.2 1650.3,571.0 1655.0,563.9 1646.0,566.0" fill="#5A66B8" stroke="#5A66B8" stroke-width="0.5" stroke-linejoin="round" /><polygon points="1385.7,599.0 1395.8,599.0 1395.8,656.3 1385.7,656.3" fill="#7F9ADC" stroke="#7F9ADC" stroke-width="0.5" stroke-linejoin="round" /><polygon points="1395.8,599.0 1406.8,599.0 1406.8,656.3 1395.8,656.3" fill="#7373B8" stroke="#7373B8" stroke-width="0.5" stroke-linejoin="round" /><polygon points="1383.3,657.3 1385.7,655.8 1406.8,655.8 1409.1,657.3 1409.1,667.3 1395.8,668.3 1383.3,666.8" fill="#A37DAE" stroke="#A37DAE" stroke-width="0.5" stroke-linejoin="round" /><polygon points="1449.9,606.0 1460.8,606.0 1460.8,671.2 1449.9,671.2" fill="#7F9ADC" stroke="#7F9ADC" stroke-width="0.5" stroke-linejoin="round" /><polygon points="1460.8,606.0 1471.8,606.0 1471.8,671.2 1460.8,671.2" fill="#7373B8" stroke="#7373B8" stroke-width="0.5" stroke-linejoin="round" /><polygon points="1446.7,672.2 1449.9,670.7 1471.8,670.7 1474.1,672.2 1474.1,682.7 1460.8,683.7 1446.7,682.2" fill="#A37DAE" stroke="#A37DAE" stroke-width="0.5" stroke-linejoin="round" /><polygon points="1415.4,599.9 1457.7,590.5 1490.6,593.7 1484.3,605.4 1470.2,610.1 1449.9,607.0" fill="#8AA2EA" stroke="#8AA2EA" stroke-width="0.5" stroke-linejoin="round" /><polygon points="1470.2,610.1 1484.3,605.4 1490.6,593.7 1480.0,597.0" fill="#5A66B8" stroke="#5A66B8" stroke-width="0.5" stroke-linejoin="round" /><polygon points="1162.0,572.7 1678.5,502.4 1679.5,509.8 1162.0,582.3" fill="#F0F03A" stroke="#F0F03A" stroke-width="0.5" stroke-linejoin="round" /><polygon points="1113.5,590.8 1162.0,582.3 1679.5,509.8 1711.5,505.6 1781.0,512.4 1265.2,594.0 1249.0,600.4 1224.5,615.3" fill="#4B5E94" stroke="#4B5E94" stroke-width="0.5" stroke-linejoin="round" /><path d="M1140 596 L1770 516 M1165 605 L1775 520" stroke="#8FA0C8" stroke-width="0.6" stroke-dasharray="10 8" opacity="0.7"/><polygon points="1249.0,600.4 1265.2,594.0 1781.0,512.4 1782.0,525.8 1764.0,537.5 1270.5,623.5 1262.0,625.0" fill="#EFEF3C" stroke="#EFEF3C" stroke-width="0.5" stroke-linejoin="round" /><path d="M1290 612 L1760 534" stroke="#C8C890" stroke-width="0.6" opacity="0.8"/><polygon points="1200.0,608.0 1249.0,600.4 1270.3,607.2 1224.5,616.8" fill="#AAB8D6" stroke="#AAB8D6" stroke-width="0.5" stroke-linejoin="round" /><polygon points="1112.0,589.5 1226.0,614.3 1226.0,616.8 1112.5,592.0" fill="#A9B5D2" stroke="#A9B5D2" stroke-width="0.5" stroke-linejoin="round" /><polygon points="1112.5,592.0 1226.0,616.8 1224.0,619.3 1113.0,594.5" fill="#E4ECF6" stroke="#E4ECF6" stroke-width="0.5" stroke-linejoin="round" /><polygon points="1119.7,596.0 1159.4,605.0 1159.4,618.4 1147.0,619.4 1119.7,605.0" fill="#6CA2C2" stroke="#6CA2C2" stroke-width="0.5" stroke-linejoin="round" /><polygon points="1158.0,602.0 1229.6,616.5 1229.6,633.6 1270.3,645.8 1273.4,724.2 1169.6,695.7 1166.5,625.0 1159.0,619.0" fill="#85B5DC" stroke="#85B5DC" stroke-width="0.5" stroke-linejoin="round" /><polygon points="1229.6,607.2 1270.3,607.2 1271.4,632.6 1280.5,633.6 1280.5,641.8 1255.0,645.8 1229.6,633.6" fill="#6CA2C2" stroke="#6CA2C2" stroke-width="0.5" stroke-linejoin="round" /><polygon points="1270.3,643.8 1276.4,641.8 1279.5,724.2 1273.4,724.2" fill="#6B9EC0" stroke="#6B9EC0" stroke-width="0.5" stroke-linejoin="round" /><polygon points="1153.3,696.7 1169.6,694.7 1295.8,720.2 1278.5,724.2" fill="#9878A6" stroke="#9878A6" stroke-width="0.5" stroke-linejoin="round" /><polygon points="1153.3,696.7 1278.5,724.2 1295.8,720.2 1295.8,731.3 1257.1,741.5 1153.3,709.0" fill="#A882B8" stroke="#A882B8" stroke-width="0.5" stroke-linejoin="round" /><path d="M1211.6 560 V575" stroke="#202060" stroke-width="1.3"/><path d="M1211.8 575 V591" stroke="#1A2AAA" stroke-width="1.5"/><path d="M1209.8 562.5 L1211.6 556 L1213.4 562.5 Z" fill="#1A2AAA"/><path d="M1136 577.5 L1112 572.5 Q1104 574 1094 573 Q1086 571 1090 569 Q1098 567 1106 569 Q1108 571 1104 572" fill="none" stroke="#555" stroke-width="0.7"/><path d="M1140 580 L1160 578" stroke="#999" stroke-width="0.6"/><path d="M1786 521 Q1800 519 1806 522 Q1812 520 1816 521" fill="none" stroke="#777" stroke-width="0.6"/></svg>
</body></html>
